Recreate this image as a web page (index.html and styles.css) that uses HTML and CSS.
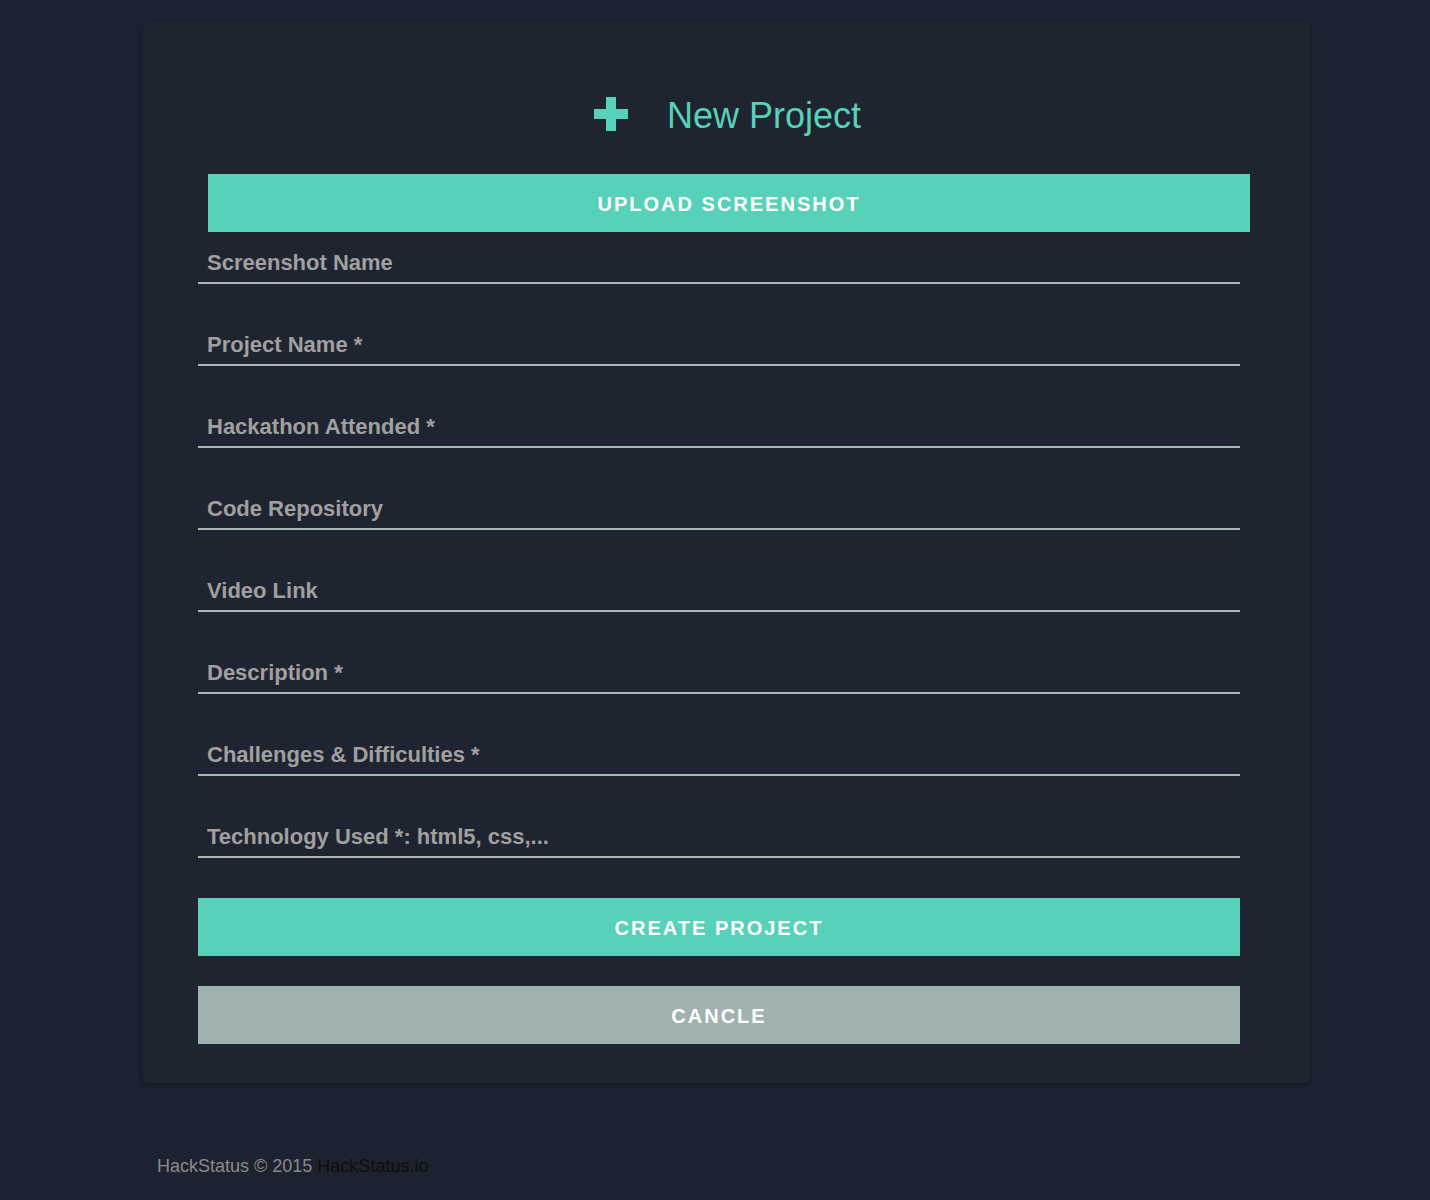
FILE: index.html
```html
<!DOCTYPE html>
<html lang="en">
<head>
<meta charset="utf-8">
<title>New Project</title>
<link rel="stylesheet" href="styles.css">
</head>
<body>
<div class="page">
  <div class="card">
    <div class="header">
      <svg class="plus" width="34" height="34" viewBox="0 0 34 34" aria-hidden="true">
        <rect x="12" y="0" width="10" height="34" fill="#57d1b8"/>
        <rect x="0" y="12" width="34" height="10" fill="#57d1b8"/>
      </svg>
      <h1 class="title">New Project</h1>
    </div>
    <form class="form">
      <button type="button" class="btn btn-upload">UPLOAD SCREENSHOT</button>
      <div class="fields">
        <input class="field" type="text" placeholder="Screenshot Name">
        <input class="field" type="text" placeholder="Project Name *">
        <input class="field" type="text" placeholder="Hackathon Attended *">
        <input class="field" type="text" placeholder="Code Repository">
        <input class="field" type="text" placeholder="Video Link">
        <input class="field" type="text" placeholder="Description *">
        <input class="field" type="text" placeholder="Challenges &amp; Difficulties *">
        <input class="field" type="text" placeholder="Technology Used *: html5, css,...">
      </div>
      <button type="button" class="btn btn-create">CREATE PROJECT</button>
      <button type="button" class="btn btn-cancel">CANCLE</button>
    </form>
  </div>
  <footer class="footer">HackStatus © 2015 <a class="footer-link" href="#">HackStatus.io</a></footer>
</div>
</body>
</html>
```

FILE: styles.css
```css
* { box-sizing: border-box; }

html, body {
  margin: 0;
  padding: 0;
  background: #1c2230;
  font-family: "Liberation Sans", Arial, Helvetica, sans-serif;
}

.page {
  padding: 22px 0 0 143px;
  min-height: 1200px;
}

.card {
  width: 1167px;
  background: #1f2431;
  border-radius: 5px;
  box-shadow: 0 2px 4px rgba(10, 14, 22, 0.45);
  padding: 74px 0 39px 0;
}

.header {
  display: flex;
  justify-content: center;
  align-items: flex-start;
  height: 40px;
  margin-bottom: 38px;
  padding-left: 2px;
}

.plus {
  margin-top: 1px;
  margin-right: 39px;
  flex: none;
}

.title {
  margin: 0;
  font-size: 36px;
  line-height: 40px;
  font-weight: normal;
  color: #57d1b8;
}

.form {
  margin-left: 55px;
  width: 1042px;
  display: flex;
  flex-direction: column;
}

.btn {
  display: flex;
  align-items: center;
  justify-content: center;
  height: 58px;
  width: 100%;
  border: 0;
  border-radius: 0;
  padding: 2px 0 0 0;
  color: #ffffff;
  font-family: "Liberation Sans", Arial, Helvetica, sans-serif;
  font-weight: bold;
  font-size: 20px;
  letter-spacing: 2px;
  cursor: pointer;
}

.btn-upload {
  background: #57d1b8;
  margin-left: 10px;
}

.btn-create {
  background: #57d1b8;
  margin-top: 40px;
}

.btn-cancel {
  background: #a0b3b0;
  margin-top: 30px;
}

.fields {
  display: flex;
  flex-direction: column;
  gap: 48px;
  margin-top: 18px;
}

.field {
  display: block;
  width: 100%;
  height: 34px;
  background: transparent;
  border: 0;
  border-bottom: 2px solid #a5b6b3;
  border-radius: 0;
  outline: none;
  padding: 0 9px 6px 9px;
  font-family: "Liberation Sans", Arial, Helvetica, sans-serif;
  font-size: 22px;
  line-height: 26px;
  font-weight: bold;
  color: #d0d0d0;
}

.field::placeholder {
  color: #a0a0a0;
  opacity: 1;
}

.footer {
  margin-top: 72px;
  padding-left: 14px;
  font-size: 18px;
  line-height: 22px;
  color: #8b8b8b;
}

.footer-link {
  color: #0e0e0e;
  text-decoration: none;
}
```
